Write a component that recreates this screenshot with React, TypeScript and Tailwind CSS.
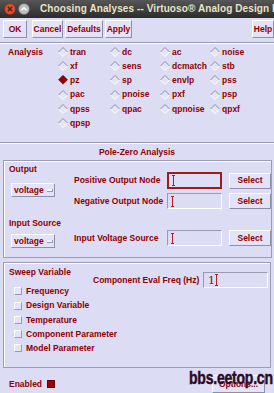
import React from "react";

function Diamond({ on }: { on?: boolean }) {
  return (
    <svg width="10" height="10" viewBox="0 0 10 10" className="shrink-0">
      {on ? (
        <>
          <polygon points="5,0.5 9.5,5 5,9.5 0.5,5" fill="#9a0000" />
          <polyline points="0.5,5 5,0.5 9.5,5" fill="none" stroke="#4a0000" strokeWidth="1" />
        </>
      ) : (
        <>
          <polygon points="5,0.5 9.5,5 5,9.5 0.5,5" fill="#e4e4f8" />
          <polyline points="0.5,5 5,0.5 9.5,5" fill="none" stroke="#8c8ca2" strokeWidth="1" />
          <polyline points="0.5,5 5,9.5 9.5,5" fill="none" stroke="#ffffff" strokeWidth="1" />
        </>
      )}
    </svg>
  );
}

function Btn({ label, w, h = "h-[18px]" }: { label: string; w: string; h?: string }) {
  return (
    <div
      className={`${w} ${h} flex items-center justify-center border border-t-white border-l-white border-b-[#8e8ea6] border-r-[#8e8ea6] bg-[#e2e2f8] shrink-0`}
    >
      {label}
    </div>
  );
}

function Field({ focused, value }: { focused?: boolean; value?: string }) {
  return (
    <div
      className={`w-[55px] h-full flex items-center pl-[3px] shrink-0 ${
        focused
          ? "border-2 border-[#a01c1c] bg-[#dedef6]"
          : "border border-t-[#9a9ab0] border-l-[#9a9ab0] border-b-white border-r-white bg-[#dcdcf4]"
      }`}
    >
      {value ? <span className="text-[#7a1010] font-normal text-[11px] leading-none">{value}</span> : null}
      <div className="flex flex-col items-center w-[3px]">
        <div className="w-[3px] h-px bg-[#b02020]" />
        <div className="w-px h-[9px] bg-[#b02020]" />
        <div className="w-[3px] h-px bg-[#b02020]" />
      </div>
    </div>
  );
}

function Dropdown() {
  return (
    <div className="w-[44px] h-[14px] flex items-center pl-[2px] border border-t-white border-l-white border-b-[#8e8ea6] border-r-[#8e8ea6] bg-[#e2e2f8]">
      <span>voltage</span>
      <div className="ml-[3px] w-[6px] h-[3px] bg-[#f4f4ff] border-b border-r border-[#9898b0]" />
    </div>
  );
}

function Check({ label }: { label: string }) {
  return (
    <div className="h-[14.25px] flex items-center">
      <div className="w-[8px] h-[8px] border border-t-white border-l-white border-b-[#9a9ab0] border-r-[#9a9ab0] bg-[#e4e4f8] shrink-0" />
      <span className="ml-[4px] whitespace-nowrap">{label}</span>
    </div>
  );
}

const rows: (string | null)[][] = [
  ["tran", "dc", "ac", "noise"],
  ["xf", "sens", "dcmatch", "stb"],
  ["pz", "sp", "envlp", "pss"],
  ["pac", "pnoise", "pxf", "psp"],
  ["qpss", "qpac", "qpnoise", "qpxf"],
  ["qpsp", null, null, null],
];

export default function App() {
  return (
    <div className="relative w-[274px] h-[393px] overflow-hidden bg-[#dcdcf4] font-['Liberation_Sans',Arial,sans-serif] font-bold text-[8.5px] leading-none text-[#900000] flex flex-col">
      {/* title bar */}
      <div className="h-[18px] shrink-0 flex items-center bg-gradient-to-b from-[#575757] to-[#2c2c2c] pl-[4px]">
        <svg width="12" height="12" viewBox="0 0 12 12" className="shrink-0">
          <circle cx="6" cy="6" r="5.5" fill="#d9522e" stroke="#7a2a18" strokeWidth="0.6" />
          <path d="M3.8 3.8 L8.2 8.2 M8.2 3.8 L3.8 8.2" stroke="#5a1a10" strokeWidth="1.4" />
        </svg>
        <svg width="12" height="12" viewBox="0 0 12 12" className="shrink-0 ml-[2px]">
          <circle cx="6" cy="6" r="5.5" fill="#bdbdbd" stroke="#5a5a5a" strokeWidth="0.6" />
          <path d="M3.5 7.2 L6 4.6 L8.5 7.2" stroke="#ffffff" strokeWidth="1.5" fill="none" />
        </svg>
        <span className="ml-[10px] text-[10px] text-[#e8e4c6] whitespace-nowrap tracking-[0.1px]">
          Choosing Analyses -- Virtuoso® Analog Design Environment
        </span>
      </div>

      {/* buttons */}
      <div className="mt-[2px] h-[18px] shrink-0 flex pl-[3px]">
        <Btn label="OK" w="w-[24px]" />
        <div className="ml-[5px]">
          <Btn label="Cancel" w="w-[31px]" />
        </div>
        <div className="ml-[2px]">
          <Btn label="Defaults" w="w-[38px]" />
        </div>
        <div className="ml-[2px]">
          <Btn label="Apply" w="w-[27px]" />
        </div>
        <div className="ml-auto">
          <Btn label="Help" w="w-[22px]" />
        </div>
      </div>

      {/* separator */}
      <div className="mt-[4px] h-[2px] shrink-0 border-t border-t-[#9a9ab0] border-b border-b-white" />

      {/* analysis */}
      <div className="mt-[1px] flex pl-[8px] shrink-0">
        <div className="w-[50px] h-[14px] flex items-center">Analysis</div>
        <div className="grid grid-cols-[52px_50px_50px_50px]">
          {rows.flat().map((r, i) => (
            <div key={i} className="h-[14.2px] flex items-center">
              {r ? (
                <>
                  <Diamond on={r === "pz"} />
                  <span className="ml-[2px]">{r}</span>
                </>
              ) : null}
            </div>
          ))}
        </div>
      </div>

      {/* separator */}
      <div className="mt-[12px] h-[2px] shrink-0 border-t border-t-[#9a9ab0] border-b border-b-white" />

      <div className="mt-[3px] h-[10px] shrink-0 flex items-center justify-center">Pole-Zero Analysis</div>

      {/* Output frame */}
      <div className="mt-[3px] ml-[3px] w-[269px] h-[98px] shrink-0 border border-[#9c9cb2] shadow-[inset_1px_1px_0_#ffffff] flex">
        <div className="w-[70px] pl-[5px] flex flex-col">
          <div className="mt-[3px] h-[10px] flex items-center">Output</div>
          <div className="mt-[9px] pl-[2px]">
            <Dropdown />
          </div>
          <div className="mt-[21px] h-[10px] flex items-center">Input Source</div>
          <div className="mt-[6px] pl-[2px]">
            <Dropdown />
          </div>
        </div>
        <div className="flex flex-col">
          <div className="mt-[11px] h-[17px] flex items-center">
            <span className="w-[93px]">Positive Output Node</span>
            <Field focused />
            <div className="ml-[7px] h-[16px]">
              <Btn label="Select" w="w-[42px]" h="h-[16px]" />
            </div>
          </div>
          <div className="mt-[4px] h-[16px] flex items-center">
            <span className="w-[93px]">Negative Output Node</span>
            <Field />
            <div className="ml-[7px] h-[16px]">
              <Btn label="Select" w="w-[42px]" h="h-[16px]" />
            </div>
          </div>
          <div className="mt-[21px] h-[16px] flex items-center">
            <span className="w-[93px]">Input Voltage Source</span>
            <Field />
            <div className="ml-[7px] h-[16px]">
              <Btn label="Select" w="w-[42px]" h="h-[16px]" />
            </div>
          </div>
        </div>
      </div>

      {/* Sweep frame */}
      <div className="mt-[4px] ml-[3px] w-[268px] h-[106px] shrink-0 border border-[#9c9cb2] shadow-[inset_1px_1px_0_#ffffff] flex">
        <div className="w-[89px] pl-[5px] flex flex-col">
          <div className="mt-[4px] h-[10px] flex items-center whitespace-nowrap">Sweep Variable</div>
          <div className="mt-[7px] pl-[5px] flex flex-col">
            <Check label="Frequency" />
            <Check label="Design Variable" />
            <Check label="Temperature" />
            <Check label="Component Parameter" />
            <Check label="Model Parameter" />
          </div>
        </div>
        <div className="mt-[9px] h-[16px] flex items-center">
          <span className="w-[110px] whitespace-nowrap">Component Eval Freq (Hz)</span>
          <div className="w-[65px] h-[16px] flex items-center pl-[4px] border border-t-[#9a9ab0] border-l-[#9a9ab0] border-b-white border-r-white">
            <span className="text-[#7a1010] font-normal text-[11px] leading-none font-['DejaVu_Serif',serif]">1</span>
            <div className="flex flex-col items-center w-[3px]">
              <div className="w-[3px] h-px bg-[#b02020]" />
              <div className="w-px h-[10px] bg-[#b02020]" />
              <div className="w-[3px] h-px bg-[#b02020]" />
            </div>
          </div>
        </div>
      </div>

      {/* bottom */}
      <div className="flex items-center pl-[9px] mt-[7px] h-[18px]">
        <span>Enabled</span>
        <div className="ml-[5px] w-[8px] h-[8px] bg-[#a00000] border border-[#600000]" />
        <div className="ml-auto mr-[9px]">
          <Btn label="Options..." w="w-[53px]" h="h-[18px]" />
        </div>
      </div>

      <div className="absolute left-[189px] top-[369px] text-[18px] font-bold text-[#2a0a26] tracking-[-0.3px] scale-x-[0.78] origin-left whitespace-nowrap [-webkit-text-stroke:0.5px_#2a0a26] [text-shadow:0_0_1px_#fff]">
        bbs.eetop.cn
      </div>
    </div>
  );
}
